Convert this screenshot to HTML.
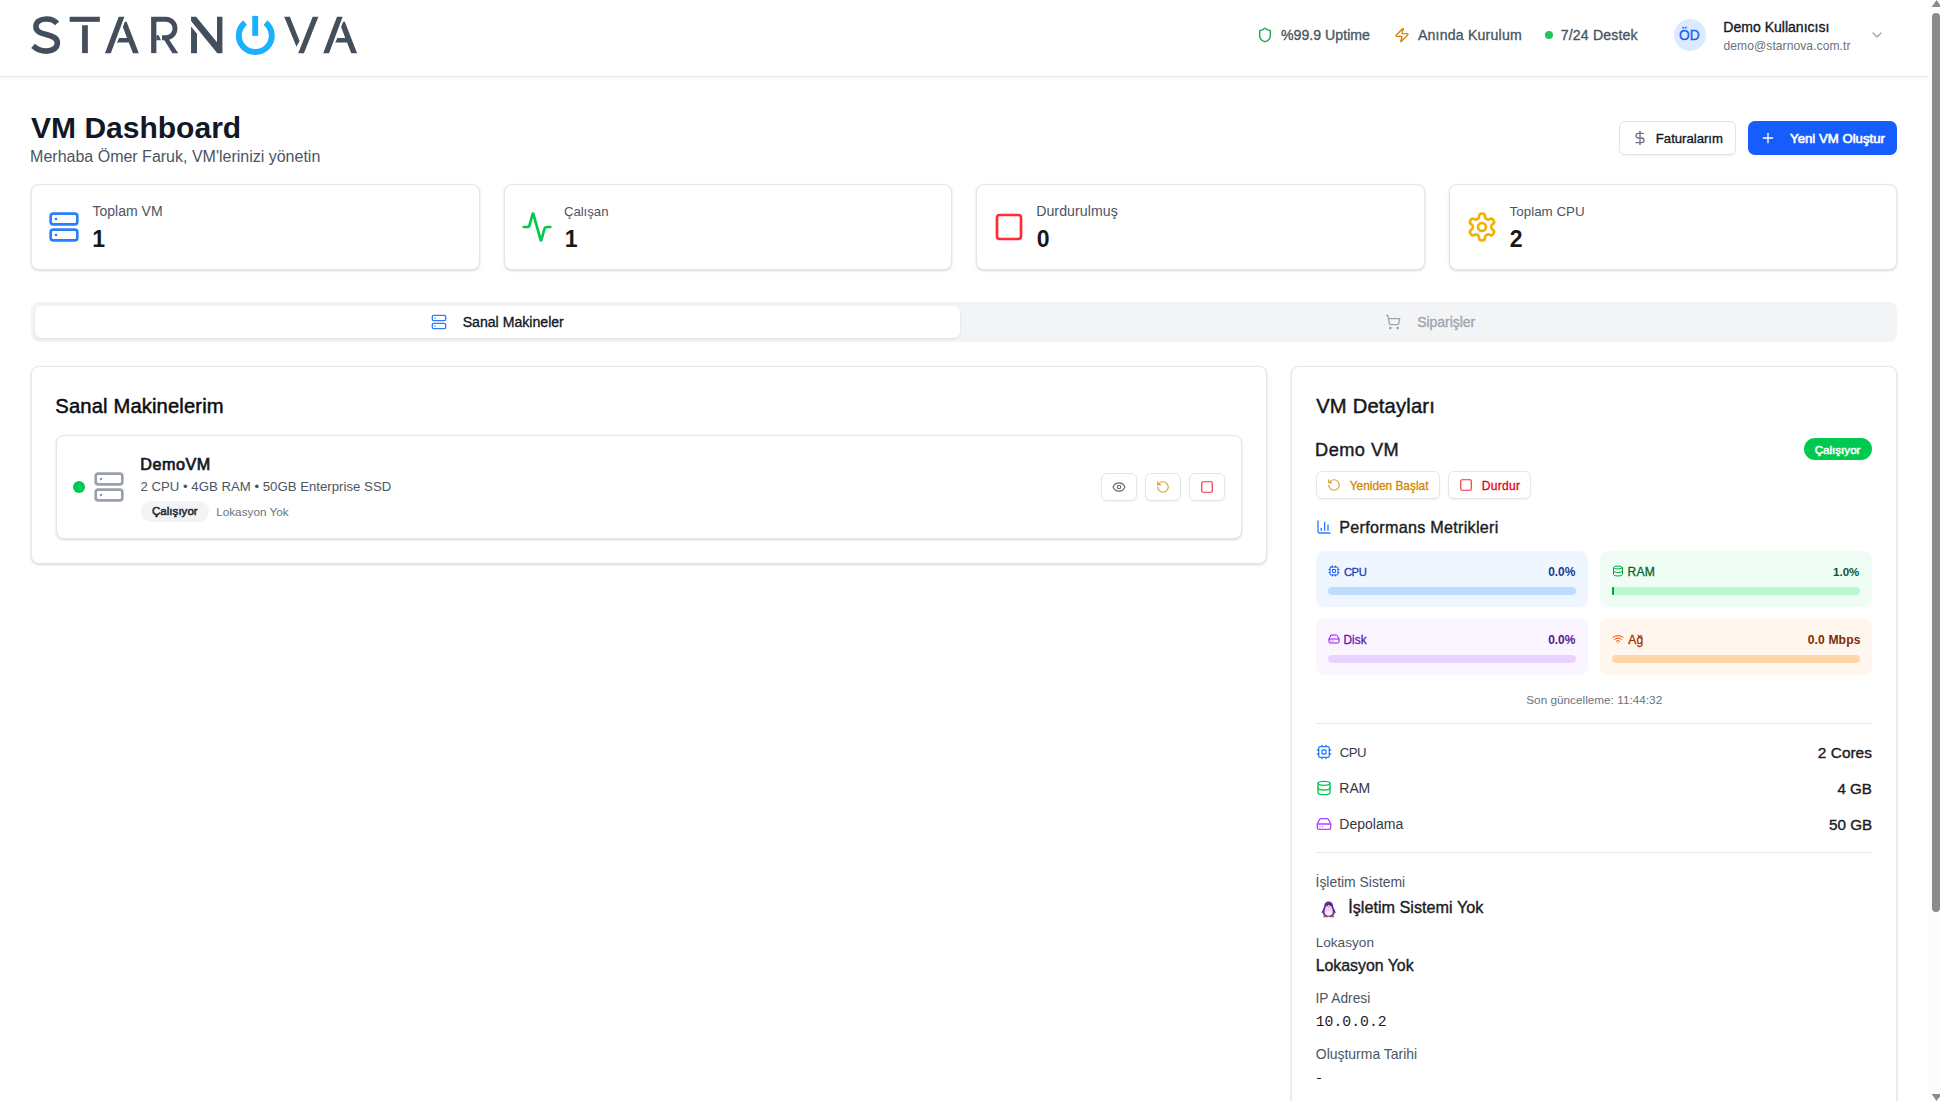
<!DOCTYPE html>
<html lang="tr"><head><meta charset="utf-8"><title>VM Dashboard</title>
<style>
html,body{margin:0;padding:0;background:#fff;}
body{width:1940px;height:1101px;overflow:hidden;position:relative;font-family:'Liberation Sans', sans-serif;}
#root{position:absolute;left:0;top:0;width:1940px;height:1101px;overflow:hidden;}
</style></head><body><div id="root">
<div style="position:absolute;left:0px;top:0px;width:1929px;height:76px;background:#fff;border-bottom:1px solid #e5e7eb;box-shadow:0 1px 3px rgba(0,0,0,.06)"></div>
<svg style="position:absolute;left:0;top:0" width="400" height="76" viewBox="0 0 400 76"><path d="M57.09 23.34 C54.29 20.27 50.35 18.95 46.40 18.95 C40.27 18.95 35.89 22.02 35.89 26.58 C35.89 31.48 40.27 32.97 46.40 34.55 C53.41 36.30 57.36 38.23 57.36 43.05 C57.36 47.87 52.54 51.11 46.40 51.11 C41.14 51.11 36.76 49.19 33.08 45.86 " fill="none" stroke="#434f5c" stroke-width="5.61"/><polygon fill="#434f5c" points="69.62,16.76 99.86,16.76 99.86,21.85 69.62,21.85"/><polygon fill="#434f5c" points="82.07,25.26 87.85,25.26 87.85,53.13 82.07,53.13"/><polygon fill="#434f5c" points="104.94,53.13 110.81,53.13 124.39,16.76 118.70,16.76"/><polygon fill="#434f5c" points="124.83,21.85 126.58,21.85 138.85,53.13 132.98,53.13 128.77,42.61 116.94,42.61 119.13,38.06 127.02,38.06 122.90,27.10"/><polygon fill="#434f5c" points="151.12,16.76 156.38,16.76 156.38,53.13 151.12,53.13"/><path d="M155.94 19.22 H166.02 A9.29 9.29 0 0 1 166.02 37.79 H162.07" fill="none" stroke="#434f5c" stroke-width="4.91"/><polygon fill="#434f5c" points="156.38,35.34 158.74,35.34 160.93,40.16 156.38,40.16"/><polygon fill="#434f5c" points="161.63,35.87 167.51,37.36 178.28,53.13 172.41,53.13"/><polygon fill="#434f5c" points="191.05,26.58 197.01,33.85 197.01,53.13 191.05,53.13"/><polygon fill="#434f5c" points="191.05,16.76 196.13,16.76 216.99,42.35 216.99,16.76 222.42,16.76 222.42,53.13 217.34,53.13 191.05,20.88"/><path d="M245.14 22.62 A16.47 16.47 0 1 0 265.43 22.62" fill="none" stroke="#1ab1ff" stroke-width="5.96"/><polygon fill="#1ab1ff" points="252.22,15.89 258.18,15.89 258.18,35.87 252.22,35.87"/><polygon fill="#434f5c" points="284.20,16.76 289.90,16.76 299.54,41.12 296.47,46.73"/><polygon fill="#434f5c" points="312.68,16.76 318.38,16.76 303.92,53.13 298.22,53.13"/><polygon fill="#434f5c" points="323.20,53.13 329.07,53.13 342.65,16.76 336.95,16.76"/><polygon fill="#434f5c" points="343.09,21.85 344.84,21.85 357.11,53.13 351.24,53.13 347.03,42.61 335.20,42.61 337.39,38.06 345.28,38.06 341.16,27.10"/></svg>
<svg style="position:absolute;left:1257px;top:27px" width="16" height="16" viewBox="0 0 24 24" fill="none" stroke="#16a34a" stroke-width="2" stroke-linecap="round" stroke-linejoin="round"><path d="M20 13c0 5-3.5 7.5-7.66 8.95a1 1 0 0 1-.67-.01C7.5 20.5 4 18 4 13V6a1 1 0 0 1 1-1c2 0 4.5-1.2 6.24-2.72a1.17 1.17 0 0 1 1.52 0C14.51 3.81 17 5 19 5a1 1 0 0 1 1 1z"/></svg>
<svg style="position:absolute;left:1394px;top:27px" width="16" height="16" viewBox="0 0 24 24" fill="none" stroke="#d4860b" stroke-width="2" stroke-linecap="round" stroke-linejoin="round"><path d="M4 14a1 1 0 0 1-.78-1.63l9.9-10.2a.5.5 0 0 1 .86.46l-1.92 6.02A1 1 0 0 0 13 10h7a1 1 0 0 1 .78 1.63l-9.9 10.2a.5.5 0 0 1-.86-.46l1.92-6.02A1 1 0 0 0 11 14z"/></svg>
<div style="position:absolute;left:1545px;top:31px;width:8px;height:8px;border-radius:50%;background:#22c55e"></div>
<div style="position:absolute;left:1674px;top:19px;width:32px;height:32px;border-radius:50%;background:#dbeafe"></div>
<svg style="position:absolute;left:1869px;top:27px" width="16" height="16" viewBox="0 0 24 24" fill="none" stroke="#9ca3af" stroke-width="2" stroke-linecap="round" stroke-linejoin="round"><path d="m6 9 6 6 6-6"/></svg>
<div style="position:absolute;left:1619.2px;top:121px;width:114.5px;height:32px;border:1px solid #e2e4e9;border-radius:6px;background:#fff;box-shadow:0 1px 2px rgba(0,0,0,.06)"></div>
<svg style="position:absolute;left:1632px;top:130px" width="16" height="16" viewBox="0 0 24 24" fill="none" stroke="#6b7280" stroke-width="2" stroke-linecap="round" stroke-linejoin="round"><line x1="12" x2="12" y1="2" y2="22"/><path d="M17 5H9.5a3.5 3.5 0 0 0 0 7h5a3.5 3.5 0 0 1 0 7H6"/></svg>
<div style="position:absolute;left:1748px;top:121px;width:149px;height:34px;border-radius:7px;background:#155dfc"></div>
<svg style="position:absolute;left:1760px;top:130px" width="16" height="16" viewBox="0 0 24 24" fill="none" stroke="#fff" stroke-width="2" stroke-linecap="round" stroke-linejoin="round"><path d="M5 12h14"/><path d="M12 5v14"/></svg>
<div style="position:absolute;left:31px;top:184px;width:446.5px;height:84px;border:1px solid #e5e6ea;border-radius:8px;background:#fff;box-shadow:0 1px 3px rgba(0,0,0,.10),0 1px 2px rgba(0,0,0,.06)"></div>
<div style="position:absolute;left:503.5px;top:184px;width:446.5px;height:84px;border:1px solid #e5e6ea;border-radius:8px;background:#fff;box-shadow:0 1px 3px rgba(0,0,0,.10),0 1px 2px rgba(0,0,0,.06)"></div>
<div style="position:absolute;left:976px;top:184px;width:446.5px;height:84px;border:1px solid #e5e6ea;border-radius:8px;background:#fff;box-shadow:0 1px 3px rgba(0,0,0,.10),0 1px 2px rgba(0,0,0,.06)"></div>
<div style="position:absolute;left:1448.5px;top:184px;width:446.5px;height:84px;border:1px solid #e5e6ea;border-radius:8px;background:#fff;box-shadow:0 1px 3px rgba(0,0,0,.10),0 1px 2px rgba(0,0,0,.06)"></div>
<svg style="position:absolute;left:48px;top:211px" width="32" height="32" viewBox="0 0 24 24" fill="none" stroke="#2b7fff" stroke-width="2" stroke-linecap="round" stroke-linejoin="round"><rect width="20" height="8" x="2" y="2" rx="2" ry="2"/><rect width="20" height="8" x="2" y="14" rx="2" ry="2"/><line x1="6" x2="6.01" y1="6" y2="6"/><line x1="6" x2="6.01" y1="18" y2="18"/></svg>
<svg style="position:absolute;left:520.5px;top:211px" width="32" height="32" viewBox="0 0 24 24" fill="none" stroke="#00c950" stroke-width="2" stroke-linecap="round" stroke-linejoin="round"><path d="M22 12h-2.48a2 2 0 0 0-1.93 1.46l-2.35 8.36a.25.25 0 0 1-.48 0L9.24 2.18a.25.25 0 0 0-.48 0l-2.35 8.36A2 2 0 0 1 4.49 12H2"/></svg>
<svg style="position:absolute;left:993px;top:211px" width="32" height="32" viewBox="0 0 24 24" fill="none" stroke="#fb2c36" stroke-width="2" stroke-linecap="round" stroke-linejoin="round"><rect width="18" height="18" x="3" y="3" rx="2"/></svg>
<svg style="position:absolute;left:1465.5px;top:211px" width="32" height="32" viewBox="0 0 24 24" fill="none" stroke="#f0b100" stroke-width="2" stroke-linecap="round" stroke-linejoin="round"><path d="M12.22 2h-.44a2 2 0 0 0-2 2v.18a2 2 0 0 1-1 1.73l-.43.25a2 2 0 0 1-2 0l-.15-.08a2 2 0 0 0-2.73.73l-.22.38a2 2 0 0 0 .73 2.73l.15.1a2 2 0 0 1 1 1.72v.51a2 2 0 0 1-1 1.74l-.15.09a2 2 0 0 0-.73 2.73l.22.38a2 2 0 0 0 2.73.73l.15-.08a2 2 0 0 1 2 0l.43.25a2 2 0 0 1 1 1.73V20a2 2 0 0 0 2 2h.44a2 2 0 0 0 2-2v-.18a2 2 0 0 1 1-1.73l.43-.25a2 2 0 0 1 2 0l.15.08a2 2 0 0 0 2.73-.73l.22-.39a2 2 0 0 0-.73-2.73l-.15-.08a2 2 0 0 1-1-1.74v-.5a2 2 0 0 1 1-1.74l.15-.09a2 2 0 0 0 .73-2.73l-.22-.38a2 2 0 0 0-2.73-.73l-.15.08a2 2 0 0 1-2 0l-.43-.25a2 2 0 0 1-1-1.73V4a2 2 0 0 0-2-2z"/><circle cx="12" cy="12" r="3"/></svg>
<div style="position:absolute;left:31px;top:302px;width:1866px;height:40px;border-radius:8px;background:#f3f4f6"></div>
<div style="position:absolute;left:35px;top:306px;width:925px;height:32px;border-radius:6px;background:#fff;box-shadow:0 1px 3px rgba(0,0,0,.10)"></div>
<svg style="position:absolute;left:431px;top:314px" width="16" height="16" viewBox="0 0 24 24" fill="none" stroke="#2b7fff" stroke-width="2" stroke-linecap="round" stroke-linejoin="round"><rect width="20" height="8" x="2" y="2" rx="2" ry="2"/><rect width="20" height="8" x="2" y="14" rx="2" ry="2"/><line x1="6" x2="6.01" y1="6" y2="6"/><line x1="6" x2="6.01" y1="18" y2="18"/></svg>
<svg style="position:absolute;left:1385px;top:314px" width="16" height="16" viewBox="0 0 24 24" fill="none" stroke="#9ca3af" stroke-width="2" stroke-linecap="round" stroke-linejoin="round"><circle cx="8" cy="21" r="1"/><circle cx="19" cy="21" r="1"/><path d="M2.05 2.05h2l2.66 12.42a2 2 0 0 0 2 1.58h9.78a2 2 0 0 0 1.95-1.57l1.65-7.43H5.12"/></svg>
<div style="position:absolute;left:31px;top:366px;width:1234px;height:196px;border:1px solid #e5e6ea;border-radius:8px;background:#fff;box-shadow:0 1px 3px rgba(0,0,0,.10),0 1px 2px rgba(0,0,0,.06)"></div>
<div style="position:absolute;left:56px;top:435px;width:1184px;height:102px;border:1px solid #e5e6ea;border-radius:8px;background:#fff;box-shadow:0 1px 3px rgba(0,0,0,.10),0 1px 2px rgba(0,0,0,.06)"></div>
<div style="position:absolute;left:73px;top:481px;width:12px;height:12px;border-radius:50%;background:#00c950"></div>
<svg style="position:absolute;left:93px;top:471px" width="32" height="32" viewBox="0 0 24 24" fill="none" stroke="#99a1af" stroke-width="2" stroke-linecap="round" stroke-linejoin="round"><rect width="20" height="8" x="2" y="2" rx="2" ry="2"/><rect width="20" height="8" x="2" y="14" rx="2" ry="2"/><line x1="6" x2="6.01" y1="6" y2="6"/><line x1="6" x2="6.01" y1="18" y2="18"/></svg>
<div style="position:absolute;left:141px;top:500.5px;width:68px;height:21.5px;border-radius:11px;background:#f3f4f6"></div>
<div style="position:absolute;left:1101px;top:473px;width:34px;height:26px;border:1px solid #e5e6ea;border-radius:6px;background:#fff;box-shadow:0 1px 2px rgba(0,0,0,.05)"></div>
<div style="position:absolute;left:1145px;top:473px;width:34px;height:26px;border:1px solid #e5e6ea;border-radius:6px;background:#fff;box-shadow:0 1px 2px rgba(0,0,0,.05)"></div>
<div style="position:absolute;left:1189px;top:473px;width:34px;height:26px;border:1px solid #e5e6ea;border-radius:6px;background:#fff;box-shadow:0 1px 2px rgba(0,0,0,.05)"></div>
<svg style="position:absolute;left:1112px;top:480px" width="14" height="14" viewBox="0 0 24 24" fill="none" stroke="#666a70" stroke-width="2" stroke-linecap="round" stroke-linejoin="round"><path d="M2.062 12.348a1 1 0 0 1 0-.696 10.75 10.75 0 0 1 19.876 0 1 1 0 0 1 0 .696 10.75 10.75 0 0 1-19.876 0"/><circle cx="12" cy="12" r="3"/></svg>
<svg style="position:absolute;left:1156px;top:480px;opacity:0.8" width="14" height="14" viewBox="0 0 24 24" fill="none" stroke="#d08700" stroke-width="2" stroke-linecap="round" stroke-linejoin="round"><path d="M3 12a9 9 0 1 0 9-9 9.75 9.75 0 0 0-6.74 2.74L3 8"/><path d="M3 3v5h5"/></svg>
<svg style="position:absolute;left:1200px;top:480px;opacity:0.8" width="14" height="14" viewBox="0 0 24 24" fill="none" stroke="#e7000b" stroke-width="2" stroke-linecap="round" stroke-linejoin="round"><rect width="18" height="18" x="3" y="3" rx="2"/></svg>
<div style="position:absolute;left:1291px;top:366px;width:604px;height:760px;border:1px solid #e5e6ea;border-radius:8px;background:#fff;box-shadow:0 1px 3px rgba(0,0,0,.10),0 1px 2px rgba(0,0,0,.06)"></div>
<div style="position:absolute;left:1803.8px;top:437.7px;width:68.4px;height:22.2px;border-radius:11.1px;background:#00c950"></div>
<div style="position:absolute;left:1316px;top:471px;width:122px;height:26px;border:1px solid #e5e6ea;border-radius:6px;background:#fff;box-shadow:0 1px 2px rgba(0,0,0,.05)"></div>
<svg style="position:absolute;left:1327px;top:478px;opacity:0.8" width="14" height="14" viewBox="0 0 24 24" fill="none" stroke="#d08700" stroke-width="2" stroke-linecap="round" stroke-linejoin="round"><path d="M3 12a9 9 0 1 0 9-9 9.75 9.75 0 0 0-6.74 2.74L3 8"/><path d="M3 3v5h5"/></svg>
<div style="position:absolute;left:1448px;top:471px;width:81px;height:26px;border:1px solid #e5e6ea;border-radius:6px;background:#fff;box-shadow:0 1px 2px rgba(0,0,0,.05)"></div>
<svg style="position:absolute;left:1459px;top:478px;opacity:0.8" width="14" height="14" viewBox="0 0 24 24" fill="none" stroke="#e7000b" stroke-width="2" stroke-linecap="round" stroke-linejoin="round"><rect width="18" height="18" x="3" y="3" rx="2"/></svg>
<svg style="position:absolute;left:1316px;top:519px" width="16" height="16" viewBox="0 0 24 24" fill="none" stroke="#2b7fff" stroke-width="2" stroke-linecap="round" stroke-linejoin="round"><path d="M3 3v16a2 2 0 0 0 2 2h16"/><path d="M18 17V9"/><path d="M13 17V5"/><path d="M8 17v-3"/></svg>
<div style="position:absolute;left:1316px;top:551px;width:272px;height:56px;border-radius:8px;background:#eff6ff"></div>
<div style="position:absolute;left:1600px;top:551px;width:272px;height:56px;border-radius:8px;background:#f0fdf4"></div>
<div style="position:absolute;left:1316px;top:619px;width:272px;height:56px;border-radius:8px;background:#faf5ff"></div>
<div style="position:absolute;left:1600px;top:619px;width:272px;height:56px;border-radius:8px;background:#fff7ed"></div>
<div style="position:absolute;left:1328px;top:587px;width:248px;height:8px;border-radius:4px;background:#bedbff"></div>
<div style="position:absolute;left:1612px;top:587px;width:248px;height:8px;border-radius:4px;background:#b9f8cf;overflow:hidden"></div>
<div style="position:absolute;left:1612px;top:587px;width:2.2px;height:8px;border-radius:1px 0 0 1px;background:#00a63e"></div>
<div style="position:absolute;left:1328px;top:655px;width:248px;height:8px;border-radius:4px;background:#e9d4ff"></div>
<div style="position:absolute;left:1612px;top:655px;width:248px;height:8px;border-radius:4px;background:#ffd6a8"></div>
<svg style="position:absolute;left:1328px;top:565px" width="12" height="12" viewBox="0 0 24 24" fill="none" stroke="#155dfc" stroke-width="2" stroke-linecap="round" stroke-linejoin="round"><rect width="16" height="16" x="4" y="4" rx="2"/><rect width="6" height="6" x="9" y="9" rx="1"/><path d="M15 2v2"/><path d="M15 20v2"/><path d="M2 15h2"/><path d="M2 9h2"/><path d="M20 15h2"/><path d="M20 9h2"/><path d="M9 2v2"/><path d="M9 20v2"/></svg>
<svg style="position:absolute;left:1612px;top:565px" width="12" height="12" viewBox="0 0 24 24" fill="none" stroke="#00a63e" stroke-width="2" stroke-linecap="round" stroke-linejoin="round"><ellipse cx="12" cy="5" rx="9" ry="3"/><path d="M3 5V19A9 3 0 0 0 21 19V5"/><path d="M3 12A9 3 0 0 0 21 12"/></svg>
<svg style="position:absolute;left:1328px;top:633px" width="12" height="12" viewBox="0 0 24 24" fill="none" stroke="#9810fa" stroke-width="2" stroke-linecap="round" stroke-linejoin="round"><line x1="22" x2="2" y1="12" y2="12"/><path d="M5.45 5.11 2 12v6a2 2 0 0 0 2 2h16a2 2 0 0 0 2-2v-6l-3.45-6.89A2 2 0 0 0 16.76 4H7.24a2 2 0 0 0-1.79 1.11z"/><line x1="6" x2="6.01" y1="16" y2="16"/><line x1="10" x2="10.01" y1="16" y2="16"/></svg>
<svg style="position:absolute;left:1612px;top:633px" width="12" height="12" viewBox="0 0 24 24" fill="none" stroke="#f54900" stroke-width="2" stroke-linecap="round" stroke-linejoin="round"><path d="M12 20h.01"/><path d="M2 8.82a15 15 0 0 1 20 0"/><path d="M5 12.859a10 10 0 0 1 14 0"/><path d="M8.5 16.429a5 5 0 0 1 7 0"/></svg>
<div style="position:absolute;left:1316px;top:723px;width:556px;height:1px;background:#e5e7eb"></div>
<div style="position:absolute;left:1316px;top:852px;width:556px;height:1px;background:#e5e7eb"></div>
<svg style="position:absolute;left:1316px;top:744px" width="16" height="16" viewBox="0 0 24 24" fill="none" stroke="#2b7fff" stroke-width="2" stroke-linecap="round" stroke-linejoin="round"><rect width="16" height="16" x="4" y="4" rx="2"/><rect width="6" height="6" x="9" y="9" rx="1"/><path d="M15 2v2"/><path d="M15 20v2"/><path d="M2 15h2"/><path d="M2 9h2"/><path d="M20 15h2"/><path d="M20 9h2"/><path d="M9 2v2"/><path d="M9 20v2"/></svg>
<svg style="position:absolute;left:1316px;top:780px" width="16" height="16" viewBox="0 0 24 24" fill="none" stroke="#00c950" stroke-width="2" stroke-linecap="round" stroke-linejoin="round"><ellipse cx="12" cy="5" rx="9" ry="3"/><path d="M3 5V19A9 3 0 0 0 21 19V5"/><path d="M3 12A9 3 0 0 0 21 12"/></svg>
<svg style="position:absolute;left:1316px;top:816px" width="16" height="16" viewBox="0 0 24 24" fill="none" stroke="#ad46ff" stroke-width="2" stroke-linecap="round" stroke-linejoin="round"><line x1="22" x2="2" y1="12" y2="12"/><path d="M5.45 5.11 2 12v6a2 2 0 0 0 2 2h16a2 2 0 0 0 2-2v-6l-3.45-6.89A2 2 0 0 0 16.76 4H7.24a2 2 0 0 0-1.79 1.11z"/><line x1="6" x2="6.01" y1="16" y2="16"/><line x1="10" x2="10.01" y1="16" y2="16"/></svg>
<svg style="position:absolute;left:1319.6px;top:900.5px" width="17.4" height="17" viewBox="-1 0 35 34"><path d="M2 24 C4 18 7 14 9 12 L12 20 Z" fill="#4a2382"/><path d="M31 24 C29 18 26 14 24 12 L21 20 Z" fill="#4a2382"/><ellipse cx="10" cy="31" rx="5" ry="2.2" fill="#f0603a"/><ellipse cx="23" cy="31" rx="5" ry="2.2" fill="#f0603a"/><path d="M16.5 1 C10.5 1 7.5 6 7.5 11 C5.5 15 4.5 19 4.5 23 C4.5 28.5 9.5 31.5 16.5 31.5 C23.5 31.5 28.5 28.5 28.5 23 C28.5 19 27.5 15 25.5 11 C25.5 6 22.5 1 16.5 1 Z" fill="#5a2d99"/><path d="M16.5 8 C12.5 8 10.5 11 10 14 C8.5 17 8 20 8 22.5 C8 27 11.5 29.5 16.5 29.5 C21.5 29.5 25 27 25 22.5 C25 20 24.5 17 23 14 C22.5 11 20.5 8 16.5 8 Z" fill="#ecd0fa"/><ellipse cx="16.5" cy="24" rx="6" ry="4.5" fill="#f8ecff"/><circle cx="13.3" cy="8.2" r="1.3" fill="#2a1250"/><circle cx="19.7" cy="8.2" r="1.3" fill="#2a1250"/><path d="M13.8 10.5 L19.2 10.5 L16.5 14 Z" fill="#f59b23"/></svg>

<div style="position:absolute;left:1317.1px;top:1077.5px;width:4.2px;height:1.7px;background:#2a2a2e"></div>
<div style="position:absolute;left:1929px;top:0px;width:11px;height:1101px;background:#fcfcfc"></div>
<div style="position:absolute;left:1932px;top:13px;width:8px;height:898.5px;border-radius:4px;background:#8b8b8b"></div>
<svg style="position:absolute;left:1930px;top:0" width="10" height="8" viewBox="0 0 10 8"><path d="M1.6 6.9 L6.6 0 L11.6 6.9 Z" fill="#8b8b8b"/></svg>
<svg style="position:absolute;left:1930px;top:1093px" width="10" height="8" viewBox="0 0 10 8"><path d="M1.6 1 L6.6 8 L11.6 1 Z" fill="#8b8b8b"/></svg>
<span style="position:absolute;white-space:pre;left:1280.94px;top:15px;font-family:'Liberation Sans', sans-serif;font-size:14.14px;line-height:40px;font-weight:400;letter-spacing:0.028px;color:#4b5563;-webkit-text-stroke:0.34px currentColor;">%99.9 Uptime</span>
<span style="position:absolute;white-space:pre;left:1417.90px;top:15px;font-family:'Liberation Sans', sans-serif;font-size:14.14px;line-height:40px;font-weight:400;letter-spacing:0.194px;color:#4b5563;-webkit-text-stroke:0.34px currentColor;">Anında Kurulum</span>
<span style="position:absolute;white-space:pre;left:1560.82px;top:15px;font-family:'Liberation Sans', sans-serif;font-size:14.14px;line-height:40px;font-weight:400;letter-spacing:0.139px;color:#4b5563;-webkit-text-stroke:0.34px currentColor;">7/24 Destek</span>
<span style="position:absolute;white-space:pre;left:1679.11px;top:16px;font-family:'Liberation Sans', sans-serif;font-size:13.76px;line-height:40px;font-weight:400;letter-spacing:-0.045px;color:#155dfc;-webkit-text-stroke:0.34px currentColor;">ÖD</span>
<span style="position:absolute;white-space:pre;left:1723.35px;top:7px;font-family:'Liberation Sans', sans-serif;font-size:14.02px;line-height:40px;font-weight:400;letter-spacing:0.006px;color:#111827;-webkit-text-stroke:0.34px currentColor;">Demo Kullanıcısı</span>
<span style="position:absolute;white-space:pre;left:1723.47px;top:26px;font-family:'Liberation Sans', sans-serif;font-size:12.12px;line-height:40px;font-weight:400;letter-spacing:0.051px;color:#6b7280;">demo@starnova.com.tr</span>
<span style="position:absolute;white-space:pre;left:31.02px;top:108px;font-family:'Liberation Sans', sans-serif;font-size:30.04px;line-height:40px;font-weight:700;letter-spacing:-0.009px;color:#111827;">VM Dashboard</span>
<span style="position:absolute;white-space:pre;left:30.11px;top:137px;font-family:'Liberation Sans', sans-serif;font-size:16.0px;line-height:40px;font-weight:400;letter-spacing:-0.002px;color:#4b5563;">Merhaba Ömer Faruk, VM'lerinizi yönetin</span>
<span style="position:absolute;white-space:pre;left:1655.81px;top:119px;font-family:'Liberation Sans', sans-serif;font-size:13.16px;line-height:40px;font-weight:400;letter-spacing:-0.01px;color:#111827;-webkit-text-stroke:0.34px currentColor;">Faturalarım</span>
<span style="position:absolute;white-space:pre;left:1790.05px;top:119px;font-family:'Liberation Sans', sans-serif;font-size:13.21px;line-height:40px;font-weight:400;letter-spacing:-0.003px;color:#ffffff;-webkit-text-stroke:0.63px currentColor;">Yeni VM Oluştur</span>
<span style="position:absolute;white-space:pre;left:92.41px;top:191px;font-family:'Liberation Sans', sans-serif;font-size:14.01px;line-height:40px;font-weight:400;letter-spacing:0.025px;color:#4b5563;">Toplam VM</span>
<span style="position:absolute;white-space:pre;left:92.36px;top:219px;font-family:'Liberation Sans', sans-serif;font-size:23.04px;line-height:40px;font-weight:700;letter-spacing:0px;color:#18181b;">1</span>
<span style="position:absolute;white-space:pre;left:563.92px;top:192px;font-family:'Liberation Sans', sans-serif;font-size:13.21px;line-height:40px;font-weight:400;letter-spacing:-0.032px;color:#4b5563;">Çalışan</span>
<span style="position:absolute;white-space:pre;left:564.86px;top:219px;font-family:'Liberation Sans', sans-serif;font-size:23.04px;line-height:40px;font-weight:700;letter-spacing:0px;color:#18181b;">1</span>
<span style="position:absolute;white-space:pre;left:1036.14px;top:191px;font-family:'Liberation Sans', sans-serif;font-size:14.14px;line-height:40px;font-weight:400;letter-spacing:0.086px;color:#4b5563;">Durdurulmuş</span>
<span style="position:absolute;white-space:pre;left:1036.77px;top:219px;font-family:'Liberation Sans', sans-serif;font-size:23.04px;line-height:40px;font-weight:700;letter-spacing:0px;color:#18181b;">0</span>
<span style="position:absolute;white-space:pre;left:1509.61px;top:192px;font-family:'Liberation Sans', sans-serif;font-size:13.39px;line-height:40px;font-weight:400;letter-spacing:0.0px;color:#4b5563;">Toplam CPU</span>
<span style="position:absolute;white-space:pre;left:1509.66px;top:219px;font-family:'Liberation Sans', sans-serif;font-size:23.04px;line-height:40px;font-weight:700;letter-spacing:0px;color:#18181b;">2</span>
<span style="position:absolute;white-space:pre;left:462.64px;top:302px;font-family:'Liberation Sans', sans-serif;font-size:14.12px;line-height:40px;font-weight:400;letter-spacing:0.001px;color:#111827;-webkit-text-stroke:0.34px currentColor;">Sanal Makineler</span>
<span style="position:absolute;white-space:pre;left:1417.24px;top:302px;font-family:'Liberation Sans', sans-serif;font-size:13.96px;line-height:40px;font-weight:400;letter-spacing:-0.017px;color:#a0a4ad;-webkit-text-stroke:0.34px currentColor;">Siparişler</span>
<span style="position:absolute;white-space:pre;left:55.37px;top:386px;font-family:'Liberation Sans', sans-serif;font-size:20.2px;line-height:40px;font-weight:400;letter-spacing:0.139px;color:#0c0c12;-webkit-text-stroke:0.48px currentColor;">Sanal Makinelerim</span>
<span style="position:absolute;white-space:pre;left:140.25px;top:444px;font-family:'Liberation Sans', sans-serif;font-size:16.16px;line-height:40px;font-weight:400;letter-spacing:0.545px;color:#111827;-webkit-text-stroke:0.72px currentColor;">DemoVM</span>
<span style="position:absolute;white-space:pre;left:140.45px;top:467px;font-family:'Liberation Sans', sans-serif;font-size:13.2px;line-height:40px;font-weight:400;letter-spacing:0.012px;color:#4b5563;">2 CPU • 4GB RAM • 50GB Enterprise SSD</span>
<span style="position:absolute;white-space:pre;left:151.97px;top:491px;font-family:'Liberation Sans', sans-serif;font-size:11.59px;line-height:40px;font-weight:400;letter-spacing:0.009px;color:#1f2937;-webkit-text-stroke:0.54px currentColor;">Çalışıyor</span>
<span style="position:absolute;white-space:pre;left:216.15px;top:492px;font-family:'Liberation Sans', sans-serif;font-size:11.76px;line-height:40px;font-weight:400;letter-spacing:0.003px;color:#6b7280;">Lokasyon Yok</span>
<span style="position:absolute;white-space:pre;left:1316.23px;top:386px;font-family:'Liberation Sans', sans-serif;font-size:20.2px;line-height:40px;font-weight:400;letter-spacing:0.181px;color:#18181b;-webkit-text-stroke:0.48px currentColor;">VM Detayları</span>
<span style="position:absolute;white-space:pre;left:1315.08px;top:430px;font-family:'Liberation Sans', sans-serif;font-size:18.18px;line-height:40px;font-weight:400;letter-spacing:0.476px;color:#1c1c1f;-webkit-text-stroke:0.43px currentColor;">Demo VM</span>
<span style="position:absolute;white-space:pre;left:1814.67px;top:430px;font-family:'Liberation Sans', sans-serif;font-size:11.64px;line-height:40px;font-weight:400;letter-spacing:-0.006px;color:#ffffff;-webkit-text-stroke:0.54px currentColor;">Çalışıyor</span>
<span style="position:absolute;white-space:pre;left:1349.74px;top:466px;font-family:'Liberation Sans', sans-serif;font-size:11.85px;line-height:40px;font-weight:400;letter-spacing:0.008px;color:#d08700;-webkit-text-stroke:0.29px currentColor;">Yeniden Başlat</span>
<span style="position:absolute;white-space:pre;left:1481.64px;top:466px;font-family:'Liberation Sans', sans-serif;font-size:12.12px;line-height:40px;font-weight:400;letter-spacing:0.265px;color:#e7000b;-webkit-text-stroke:0.29px currentColor;">Durdur</span>
<span style="position:absolute;white-space:pre;left:1339.26px;top:507px;font-family:'Liberation Sans', sans-serif;font-size:16.16px;line-height:40px;font-weight:400;letter-spacing:0.275px;color:#1c1c1f;-webkit-text-stroke:0.38px currentColor;">Performans Metrikleri</span>
<span style="position:absolute;white-space:pre;left:1343.88px;top:552px;font-family:'Liberation Sans', sans-serif;font-size:11.28px;line-height:40px;font-weight:400;letter-spacing:-0.416px;color:#193cb8;-webkit-text-stroke:0.29px currentColor;">CPU</span>
<span style="position:absolute;white-space:pre;left:1548.13px;top:552px;font-family:'Liberation Sans', sans-serif;font-size:11.98px;line-height:40px;font-weight:700;letter-spacing:-0.011px;color:#1c398e;">0.0%</span>
<span style="position:absolute;white-space:pre;left:1627.54px;top:552px;font-family:'Liberation Sans', sans-serif;font-size:12.12px;line-height:40px;font-weight:400;letter-spacing:0.217px;color:#016630;-webkit-text-stroke:0.29px currentColor;">RAM</span>
<span style="position:absolute;white-space:pre;left:1832.90px;top:552px;font-family:'Liberation Sans', sans-serif;font-size:11.59px;line-height:40px;font-weight:700;letter-spacing:0.046px;color:#0d542b;">1.0%</span>
<span style="position:absolute;white-space:pre;left:1343.55px;top:620px;font-family:'Liberation Sans', sans-serif;font-size:11.87px;line-height:40px;font-weight:400;letter-spacing:-0.005px;color:#6e11b0;-webkit-text-stroke:0.29px currentColor;">Disk</span>
<span style="position:absolute;white-space:pre;left:1548.13px;top:620px;font-family:'Liberation Sans', sans-serif;font-size:11.98px;line-height:40px;font-weight:700;letter-spacing:-0.011px;color:#59168b;">0.0%</span>
<span style="position:absolute;white-space:pre;left:1628.18px;top:620px;font-family:'Liberation Sans', sans-serif;font-size:12.12px;line-height:40px;font-weight:400;letter-spacing:0.215px;color:#9f2d00;-webkit-text-stroke:0.29px currentColor;">Ağ</span>
<span style="position:absolute;white-space:pre;left:1807.72px;top:620px;font-family:'Liberation Sans', sans-serif;font-size:12.12px;line-height:40px;font-weight:700;letter-spacing:0.122px;color:#7e2a0c;">0.0 Mbps</span>
<span style="position:absolute;white-space:pre;left:1526.26px;top:680px;font-family:'Liberation Sans', sans-serif;font-size:11.75px;line-height:40px;font-weight:400;letter-spacing:0.011px;color:#6b7280;">Son güncelleme: 11:44:32</span>
<span style="position:absolute;white-space:pre;left:1339.82px;top:733px;font-family:'Liberation Sans', sans-serif;font-size:13.16px;line-height:40px;font-weight:400;letter-spacing:-0.532px;color:#36383d;">CPU</span>
<span style="position:absolute;white-space:pre;left:1817.87px;top:733px;font-family:'Liberation Sans', sans-serif;font-size:15.43px;line-height:40px;font-weight:400;letter-spacing:0.008px;color:#1c1c1f;-webkit-text-stroke:0.38px currentColor;">2 Cores</span>
<span style="position:absolute;white-space:pre;left:1339.37px;top:768px;font-family:'Liberation Sans', sans-serif;font-size:13.97px;line-height:40px;font-weight:400;letter-spacing:-0.071px;color:#36383d;">RAM</span>
<span style="position:absolute;white-space:pre;left:1837.62px;top:769px;font-family:'Liberation Sans', sans-serif;font-size:15.14px;line-height:40px;font-weight:400;letter-spacing:-0.066px;color:#1c1c1f;-webkit-text-stroke:0.38px currentColor;">4 GB</span>
<span style="position:absolute;white-space:pre;left:1339.34px;top:804px;font-family:'Liberation Sans', sans-serif;font-size:14.02px;line-height:40px;font-weight:400;letter-spacing:0.001px;color:#36383d;">Depolama</span>
<span style="position:absolute;white-space:pre;left:1829.09px;top:805px;font-family:'Liberation Sans', sans-serif;font-size:15.22px;line-height:40px;font-weight:400;letter-spacing:-0.03px;color:#1c1c1f;-webkit-text-stroke:0.38px currentColor;">50 GB</span>
<span style="position:absolute;white-space:pre;left:1315.52px;top:862px;font-family:'Liberation Sans', sans-serif;font-size:13.92px;line-height:40px;font-weight:400;letter-spacing:0.001px;color:#4b5563;">İşletim Sistemi</span>
<span style="position:absolute;white-space:pre;left:1348.15px;top:887px;font-family:'Liberation Sans', sans-serif;font-size:16.16px;line-height:40px;font-weight:400;letter-spacing:0.028px;color:#1c1c1f;-webkit-text-stroke:0.38px currentColor;">İşletim Sistemi Yok</span>
<span style="position:absolute;white-space:pre;left:1315.67px;top:923px;font-family:'Liberation Sans', sans-serif;font-size:13.63px;line-height:40px;font-weight:400;letter-spacing:-0.004px;color:#4b5563;">Lokasyon</span>
<span style="position:absolute;white-space:pre;left:1315.68px;top:946px;font-family:'Liberation Sans', sans-serif;font-size:15.92px;line-height:40px;font-weight:400;letter-spacing:-0.018px;color:#1c1c1f;-webkit-text-stroke:0.38px currentColor;">Lokasyon Yok</span>
<span style="position:absolute;white-space:pre;left:1315.54px;top:979px;font-family:'Liberation Sans', sans-serif;font-size:13.74px;line-height:40px;font-weight:400;letter-spacing:-0.004px;color:#4b5563;">IP Adresi</span>
<span style="position:absolute;white-space:pre;left:1315.71px;top:1002px;font-family:'Liberation Mono', monospace;font-size:14.77px;line-height:40px;font-weight:400;letter-spacing:0.01px;color:#1c1c1f;">10.0.0.2</span>
<span style="position:absolute;white-space:pre;left:1315.84px;top:1034px;font-family:'Liberation Sans', sans-serif;font-size:13.96px;line-height:40px;font-weight:400;letter-spacing:-0.005px;color:#4b5563;">Oluşturma Tarihi</span>
</div></body></html>
